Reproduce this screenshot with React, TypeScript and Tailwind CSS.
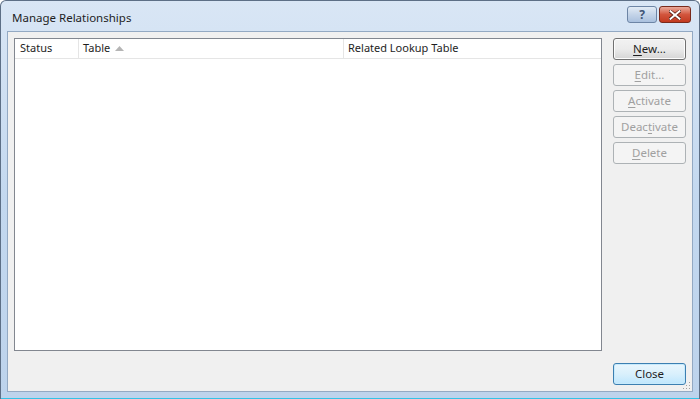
import React from "react";

const font = { fontFamily: '"Noto Sans", "Open Sans", sans-serif' };

function Mnemonic({ text, index }: { text: string; index: number }) {
  return (
    <>
      {text.slice(0, index)}
      <span className="underline underline-offset-2">{text[index]}</span>
      {text.slice(index + 1)}
    </>
  );
}

function SideButton({
  label,
  index,
  disabled,
}: {
  label: string;
  index: number;
  disabled?: boolean;
}) {
  return (
    <button
      type="button"
      className={
        disabled
          ? "h-[22px] w-[73px] rounded-[3px] border border-[#adb2b5] bg-[#f4f4f4] text-[11.5px] leading-none text-[#a0a0a0]"
          : "h-[22px] w-[73px] rounded-[3px] border border-[#707070] bg-gradient-to-b from-[#f2f2f2] via-[#ebebeb] to-[#d5d5d5] text-[11.5px] leading-none text-[#1e1e1e] shadow-[inset_0_0_0_1px_#fcfcfc]"
      }
    >
      <Mnemonic text={label} index={index} />
    </button>
  );
}

export default function App() {
  return (
    <div
      style={font}
      className="flex h-[399px] w-[700px] flex-col overflow-hidden rounded-t-[6px] border border-b-0 border-[#5d6f86] bg-gradient-to-b from-[#d9e6f5] via-[#c3d8ef] to-[#bdd3ec]"
    >
      {/* title bar */}
      <div className="flex h-[30px] shrink-0 items-center justify-between pl-[11px] pr-[8px]">
        <span className="pt-[3px] text-[11.5px] text-[#1e1e1e]">Manage Relationships</span>
        <div className="mt-[-3px] flex items-center gap-[2px]">
          <div className="flex h-[17px] w-[30px] items-center justify-center rounded-[3px] border border-[#6d85a5] bg-gradient-to-b from-[#e2ebf5] via-[#c4d4e8] to-[#aac1de] text-[12px] font-bold leading-none text-[#3f5576]">
            ?
          </div>
          <div className="flex h-[17px] w-[32px] items-center justify-center rounded-[3px] border border-[#7a2a1c] bg-gradient-to-b from-[#e9a99b] via-[#d2553d] to-[#c2391f]">
            <svg width="12" height="10" viewBox="0 0 12 10">
              <path
                d="M1 1 L11 9 M11 1 L1 9"
                stroke="#5a1e14"
                strokeWidth="3.4"
                strokeLinecap="square"
              />
              <path
                d="M1.5 1.2 L10.5 8.8 M10.5 1.2 L1.5 8.8"
                stroke="#ffffff"
                strokeWidth="2"
                strokeLinecap="square"
              />
            </svg>
          </div>
        </div>
      </div>

      {/* client area */}
      <div className="mx-[6px] flex flex-1 flex-col">
        <div className="relative flex flex-1 gap-[11px] border border-[#93a9c3] bg-[#f0f0f0] px-[6px] pb-[6px] pt-[6px]">
          <div className="flex flex-1 flex-col">
            <div className="h-[313px] border border-[#828790] bg-white">
              <div className="flex h-[20px] border-b border-[#e5e5e5] text-[11px] text-[#1e1e1e]">
                <div className="flex w-[64px] items-center border-r border-[#e5e5e5] pl-[5px]">
                  Status
                </div>
                <div className="flex w-[265px] items-center gap-[5px] border-r border-[#e5e5e5] pl-[4px]">
                  Table
                  <svg width="9" height="5" viewBox="0 0 9 5">
                    <path d="M0 5 L4.5 0 L9 5 Z" fill="#b5b5b5" />
                  </svg>
                </div>
                <div className="flex items-center pl-[4px]">Related Lookup Table</div>
              </div>
            </div>
          </div>

          <div className="flex w-[73px] flex-col justify-between">
            <div className="flex flex-col gap-[4px]">
              <SideButton label="New..." index={0} />
              <SideButton label="Edit..." index={0} disabled />
              <SideButton label="Activate" index={0} disabled />
              <SideButton label="Deactivate" index={4} disabled />
              <SideButton label="Delete" index={0} disabled />
            </div>
            <button
              type="button"
              className="h-[22px] w-[73px] rounded-[3px] border border-[#3c7fb1] bg-gradient-to-b from-[#eaf6fd] via-[#d9f0fc] to-[#bee6fd] text-[11.5px] leading-none text-[#1e1e1e] shadow-[inset_0_0_0_1px_#c7eafc]"
            >
              Close
            </button>
          </div>

          {/* size grip */}
          <svg
            className="absolute bottom-[1px] right-[1px]"
            width="10"
            height="10"
            viewBox="0 0 10 10"
          >
            {[
              [8, 2],
              [8, 5],
              [5, 5],
              [8, 8],
              [5, 8],
              [2, 8],
            ].map(([x, y]) => (
              <rect key={`${x}-${y}`} x={x} y={y} width="1" height="1" fill="#a0a0a0" />
            ))}
          </svg>
        </div>
        <div className="h-[6px] shrink-0" />
      </div>
      <div className="h-[1px] shrink-0 bg-[#33c3e6]" />
    </div>
  );
}
